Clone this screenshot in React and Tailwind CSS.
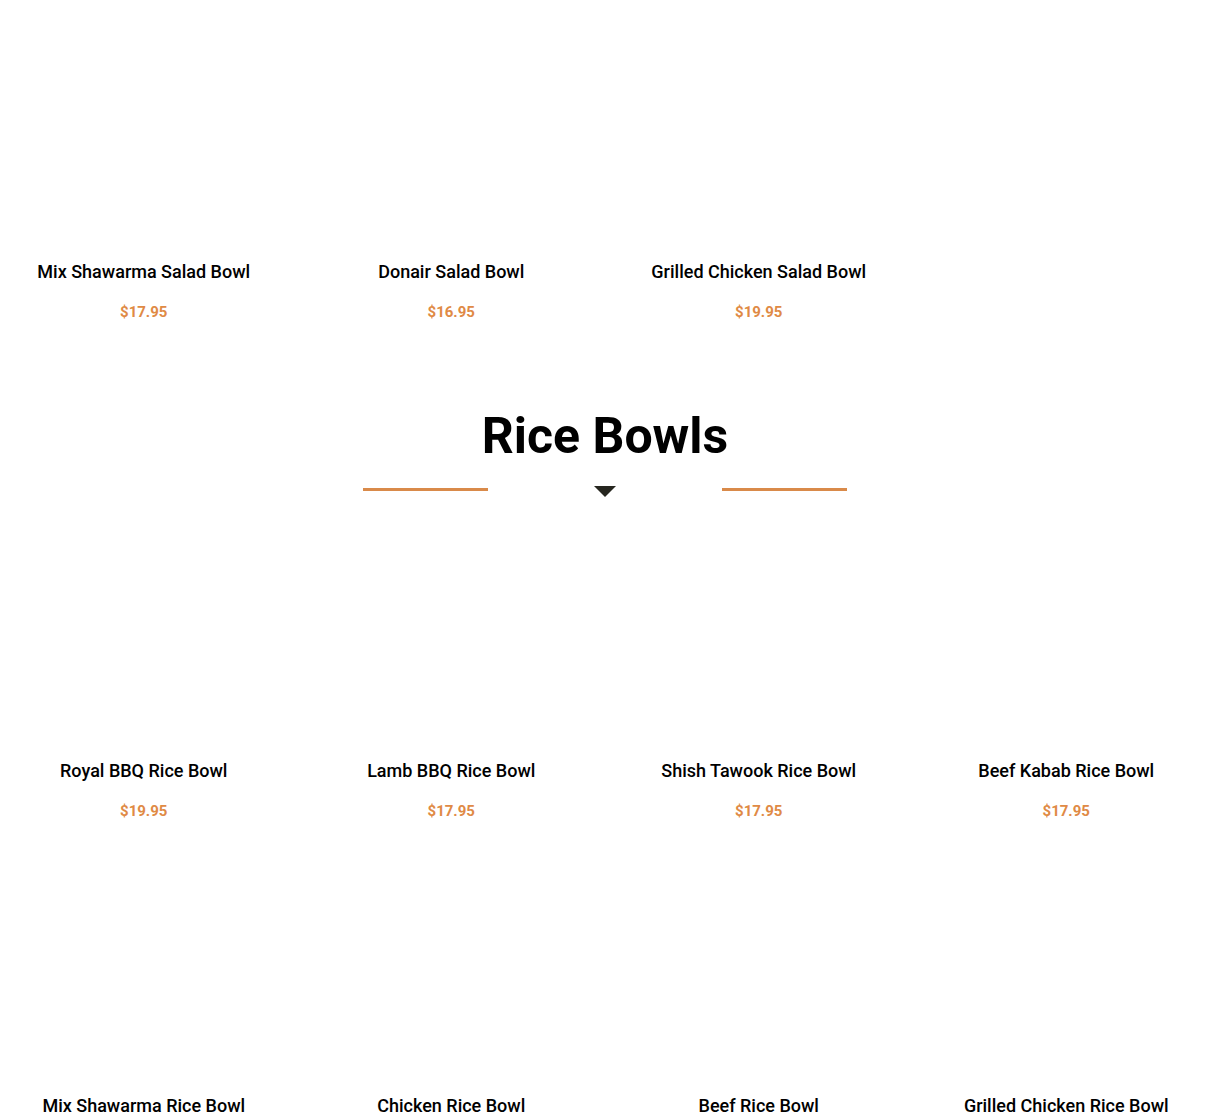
import React from 'react';

const saladBowls = [
  { name: 'Mix Shawarma Salad Bowl', price: '$17.95' },
  { name: 'Donair Salad Bowl', price: '$16.95' },
  { name: 'Grilled Chicken Salad Bowl', price: '$19.95' },
];

const riceBowls = [
  { name: 'Royal BBQ Rice Bowl', price: '$19.95' },
  { name: 'Lamb BBQ Rice Bowl', price: '$17.95' },
  { name: 'Shish Tawook Rice Bowl', price: '$17.95' },
  { name: 'Beef Kabab Rice Bowl', price: '$17.95' },
  { name: 'Mix Shawarma Rice Bowl', price: '$17.95' },
  { name: 'Chicken Rice Bowl', price: '$15.95' },
  { name: 'Beef Rice Bowl', price: '$15.95' },
  { name: 'Grilled Chicken Rice Bowl', price: '$19.95' },
];

const MenuCard = ({ item }) => (
  <div className="flex flex-col items-center text-center">
    <div className="h-[244px] w-full bg-white"></div>
    <h3 className="mt-4 text-[18px] leading-[22px] font-medium text-black">{item.name}</h3>
    <p className="mt-[19px] text-[15px] leading-[20px] font-bold text-[#e08a45]">{item.price}</p>
  </div>
);

const SectionHeading = ({ title }) => (
  <div className="flex flex-col items-center">
    <h2 className="text-[50px] leading-[68px] font-bold text-black">{title}</h2>
    <div className="mt-[13px] flex items-center justify-center gap-[106px] h-[12px]">
      <span className="block w-[125px] h-[3px] bg-[#d98a4a]"></span>
      <svg width="22" height="11" viewBox="0 0 22 11" className="block mt-[4px]">
        <polygon points="0,0 22,0 11,11" fill="#26261f" />
      </svg>
      <span className="block w-[125px] h-[3px] bg-[#d98a4a]"></span>
    </div>
  </div>
);

export default function App() {
  return (
    <div className="w-full min-h-screen overflow-hidden bg-white pt-[1px] font-['Roboto',sans-serif]">
      <div className="-mx-[10px] grid grid-cols-4 gap-y-[14px]">
        {saladBowls.map((item) => <MenuCard key={item.name} item={item} />)}
      </div>

      <div className="mt-[80px]">
        <SectionHeading title="Rice Bowls" />
      </div>

      <div className="-mx-[10px] mt-[5px] grid grid-cols-4 gap-y-[14px]">
        {riceBowls.map((item) => <MenuCard key={item.name} item={item} />)}
      </div>
    </div>
  );
}
